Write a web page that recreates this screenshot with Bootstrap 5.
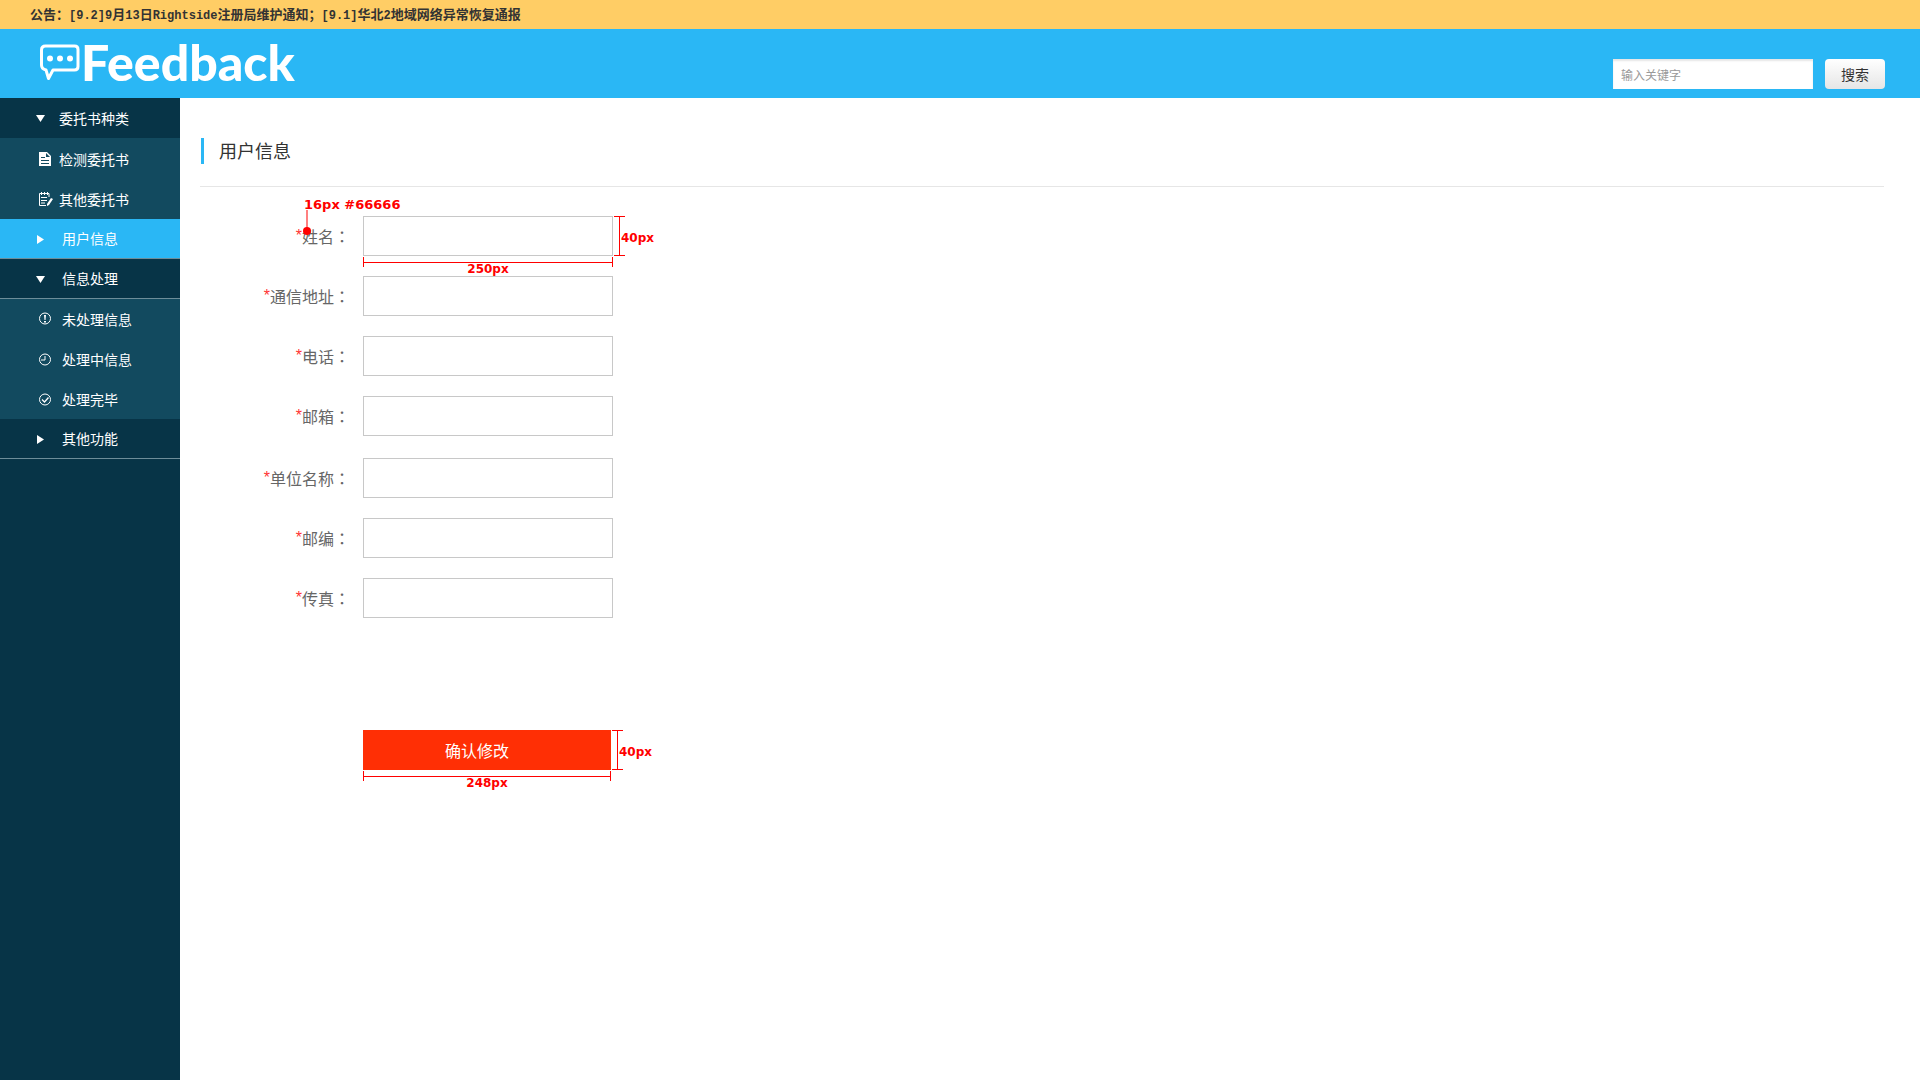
<!DOCTYPE html>
<html lang="zh-CN">
<head>
<meta charset="utf-8">
<meta name="viewport" content="width=device-width, initial-scale=1">
<title>Feedback</title>
<link href="https://cdn.jsdelivr.net/npm/bootstrap@5.3.0/dist/css/bootstrap.min.css" rel="stylesheet">
<style>
body{font-family:"Noto Sans CJK SC",sans-serif;font-size:14px;color:#333;background:#fff}
.notice{background:#ffcd65;height:29px;padding-left:30px;font-size:13px;line-height:28px;color:#333}
.notice .latin{font-family:"Liberation Mono",monospace;font-size:12px}
.topbar{background:#2ab7f5;height:69px;padding:0 35px 9px 40px}
.brand{color:#fff;font:900 50px/50px Lato,sans-serif;margin-top:8px}
.brand svg{margin-top:7px}
.search-box{width:200px;height:30px;padding:0 8px;border:0;border-radius:0;font-size:12px;line-height:28px;box-shadow:inset 0 2px 2px #e6e6e6}
.search-box::placeholder{color:#999}
.search-btn{width:60px;height:30px;padding:0;border:0;border-radius:4px;font-size:14px;color:#333;background:linear-gradient(#fff,#e6e6e6)}
.sidebar{width:180px;background:#073447}
.sidebar a{height:40px;color:#fff;text-decoration:none;padding-left:35px}
.sidebar a svg{width:20px;height:16px;flex:none;fill:#fff}
.sidebar .far svg{margin-right:7px}
.sidebar .near svg{margin-right:4px}
.sidebar .submenu{background:#124a5f}
.sidebar .lined{border-bottom:1px solid #6d8d99}
.sidebar .first-row{height:41px;border-bottom:1px solid #124a5f}
.sidebar .current{background:#2ab7f5}
.content{padding:40px 36px 40px 20px}
.page-title{font-size:18px;line-height:24px;border-left:3px solid #2ab7f5;padding:0 0 2px 15px;margin:0 0 0 1px}
.rule{border-top:1px solid #e6e6e6;margin:22px 0 29px}
.field-rows{display:grid;gap:20px}
.field-label{display:flex;align-items:center;justify-content:flex-end;width:150px;height:40px;font-size:16px;line-height:24px;color:#666;margin-right:13px}
.field-label .colon{font-family:"Noto Sans CJK TC",sans-serif}
.field-label i{color:#f33;font-family:"Liberation Sans",sans-serif;font-style:normal}
.field-box{width:250px;height:40px;border:1px solid #c8c8c8;border-radius:0}
.second-group{margin-top:22px}
.submit-line{margin:112px 0 0 163px}
.submit-btn{width:248px;height:40px;border:0;border-radius:0;background:#ff2f05;color:#fff;font-size:16px;padding:0 20px 0 0}
.submit-btn:hover{background:#e62a04;color:#fff}
.dim{font:700 12px/14px "DejaVu Sans",sans-serif;color:#f00;white-space:nowrap;pointer-events:none}
.dim svg{display:block;stroke:#f00;fill:none;overflow:visible}
.dim-w{top:100%;left:0;width:100%;text-align:center;z-index:2}
.dim-h{left:100%;top:2px;height:40px;display:flex;align-items:center}
.dim-h svg{margin:-4px -1px 0 0}
.dim-font{left:104px;top:-18px;font-size:13px;z-index:2}
</style>
<script src="https://cdn.jsdelivr.net/npm/bootstrap@5.3.0/dist/js/bootstrap.bundle.min.js"></script>
</head>
<body class="d-flex flex-column min-vh-100">
<div class="notice fw-bold text-nowrap">公告：<span class="latin">[9.2]9</span>月<span class="latin">13</span>日<span class="latin">Rightside</span>注册局维护通知；<span class="latin">[9.1]</span>华北<span class="latin">2</span>地域网络异常恢复通报</div>
<header class="topbar d-flex justify-content-between">
  <div class="brand d-flex align-items-start">
    <svg width="41" height="38" viewBox="0 0 41 38" aria-hidden="true"><path d="M5.500 2H34.500Q38 2 38 5.500V22.500Q38 26 34.500 26H13L8.500 34.500L6 26Q1.500 25 1.500 21V6Q1.500 2 5.500 2Z" fill="none" stroke="#fff" stroke-width="3" stroke-linejoin="round"/><g fill="#fff"><circle cx="10" cy="14.500" r="3"/><circle cx="20" cy="14.500" r="3"/><circle cx="30" cy="14.500" r="3"/></g></svg>
    <span>Feedback</span>
  </div>
  <form class="d-flex align-items-end" role="search">
    <label class="visually-hidden" for="keyword">搜索</label>
    <input class="form-control search-box me-2" id="keyword" type="text" placeholder="输入关键字">
    <button class="btn search-btn ms-1" type="button">搜索</button>
  </form>
</header>
<div class="d-flex flex-grow-1">
  <nav class="sidebar flex-shrink-0">
    <a href="#" class="d-flex align-items-center near first-row"><svg viewBox="0 0 20 16"><path d="M1 5h9l-4.500 7z"/></svg>委托书种类</a>
    <div class="submenu">
      <a href="#" class="d-flex align-items-center near"><svg viewBox="0 0 20 16"><path fill-rule="evenodd" d="M4 1h8l4 4v10H4zM11 2v4h4zM6 6h4v1H6zM6 9h8v1H6zM6 12h8v1H6z"/></svg>检测委托书</a>
      <a href="#" class="d-flex align-items-center near"><svg viewBox="0 0 20 16"><path d="M14 6V2.500H4.500V14.500H11M6.500 1v3M9.500 1v3M12.500 1v3M6 6.500h6M6 9.500h6M6 12h4" fill="none" stroke="#fff"/><path d="M16 7l2 1-4 6-2 1v-2z"/></svg>其他委托书</a>
    </div>
    <a href="#" class="d-flex align-items-center far current lined" aria-current="page"><svg viewBox="0 0 20 16"><path d="M2 4l7 4.500-7 4.500z"/></svg>用户信息</a>
    <a href="#" class="d-flex align-items-center far lined"><svg viewBox="0 0 20 16"><path d="M1 5h9l-4.500 7z"/></svg>信息处理</a>
    <div class="submenu">
      <a href="#" class="d-flex align-items-center far"><svg viewBox="0 0 20 16"><circle cx="10" cy="7.500" r="5.500" fill="none" stroke="#fff"/><path d="M9 4h2l-.5 5h-1zM9 10h2v1.500H9z"/></svg>未处理信息</a>
      <a href="#" class="d-flex align-items-center far"><svg viewBox="0 0 20 16"><path d="M10 5v4H6" fill="none" stroke="#fff"/><circle cx="10" cy="8.500" r="5.500" fill="none" stroke="#fff"/></svg>处理中信息</a>
      <a href="#" class="d-flex align-items-center far"><svg viewBox="0 0 20 16"><path d="M7 8.500l2.500 2.500 4-4.500" fill="none" stroke="#fff" stroke-width="1.300"/><circle cx="10" cy="8.500" r="5.500" fill="none" stroke="#fff"/></svg>处理完毕</a>
    </div>
    <a href="#" class="d-flex align-items-center far lined"><svg viewBox="0 0 20 16"><path d="M2 4l7 4.500-7 4.500z"/></svg>其他功能</a>
  </nav>
  <main class="content flex-grow-1">
    <h1 class="page-title fw-normal">用户信息</h1>
    <div class="rule"></div>
    <form>
      <div class="field-rows">
        <div class="d-flex position-relative">
          <label class="field-label" for="f-name"><i>*</i>姓名<span class="colon" lang="zh-Hant">：</span></label>
          <div class="position-relative">
            <input class="form-control field-box" id="f-name" type="text">
            <div class="dim dim-w position-absolute"><svg width="250" height="6" viewBox="0 0 250 6"><path d="M.5 1v10M249.500 1v10M0 6.500h250"/></svg>250px</div>
            <div class="dim dim-h position-absolute"><svg width="9" height="40"><path d="M1 .5h11M1 39.500h11M6.500 0v40"/></svg>40px</div>
          </div>
          <div class="dim dim-font position-absolute">16px #66666<svg width="8" height="30" aria-hidden="true"><path d="M3 -2v20" stroke="#ff8080" stroke-width="2"/><circle cx="3" cy="19" r="4" fill="#f00" stroke="none"/></svg></div>
        </div>
        <div class="d-flex">
          <label class="field-label" for="f-addr"><i>*</i>通信地址<span class="colon" lang="zh-Hant">：</span></label>
          <input class="form-control field-box" id="f-addr" type="text">
        </div>
        <div class="d-flex">
          <label class="field-label" for="f-tel"><i>*</i>电话<span class="colon" lang="zh-Hant">：</span></label>
          <input class="form-control field-box" id="f-tel" type="tel">
        </div>
        <div class="d-flex">
          <label class="field-label" for="f-mail"><i>*</i>邮箱<span class="colon" lang="zh-Hant">：</span></label>
          <input class="form-control field-box" id="f-mail" type="email">
        </div>
      </div>
      <div class="field-rows second-group">
        <div class="d-flex">
          <label class="field-label" for="f-org"><i>*</i>单位名称<span class="colon" lang="zh-Hant">：</span></label>
          <input class="form-control field-box" id="f-org" type="text">
        </div>
        <div class="d-flex">
          <label class="field-label" for="f-zip"><i>*</i>邮编<span class="colon" lang="zh-Hant">：</span></label>
          <input class="form-control field-box" id="f-zip" type="text">
        </div>
        <div class="d-flex">
          <label class="field-label" for="f-fax"><i>*</i>传真<span class="colon" lang="zh-Hant">：</span></label>
          <input class="form-control field-box" id="f-fax" type="text">
        </div>
      </div>
      <div class="submit-line d-flex">
        <div class="position-relative">
          <button class="btn submit-btn d-block" type="button">确认修改</button>
          <div class="dim dim-w position-absolute"><svg width="248" height="6" viewBox="0 0 248 6"><path d="M.5 1v10M247.500 1v10M0 6.500h248"/></svg>248px</div>
          <div class="dim dim-h position-absolute"><svg width="9" height="40"><path d="M1 .5h11M1 39.500h11M6.500 0v40"/></svg>40px</div>
        </div>
      </div>
    </form>
  </main>
</div>
</body>
</html>
